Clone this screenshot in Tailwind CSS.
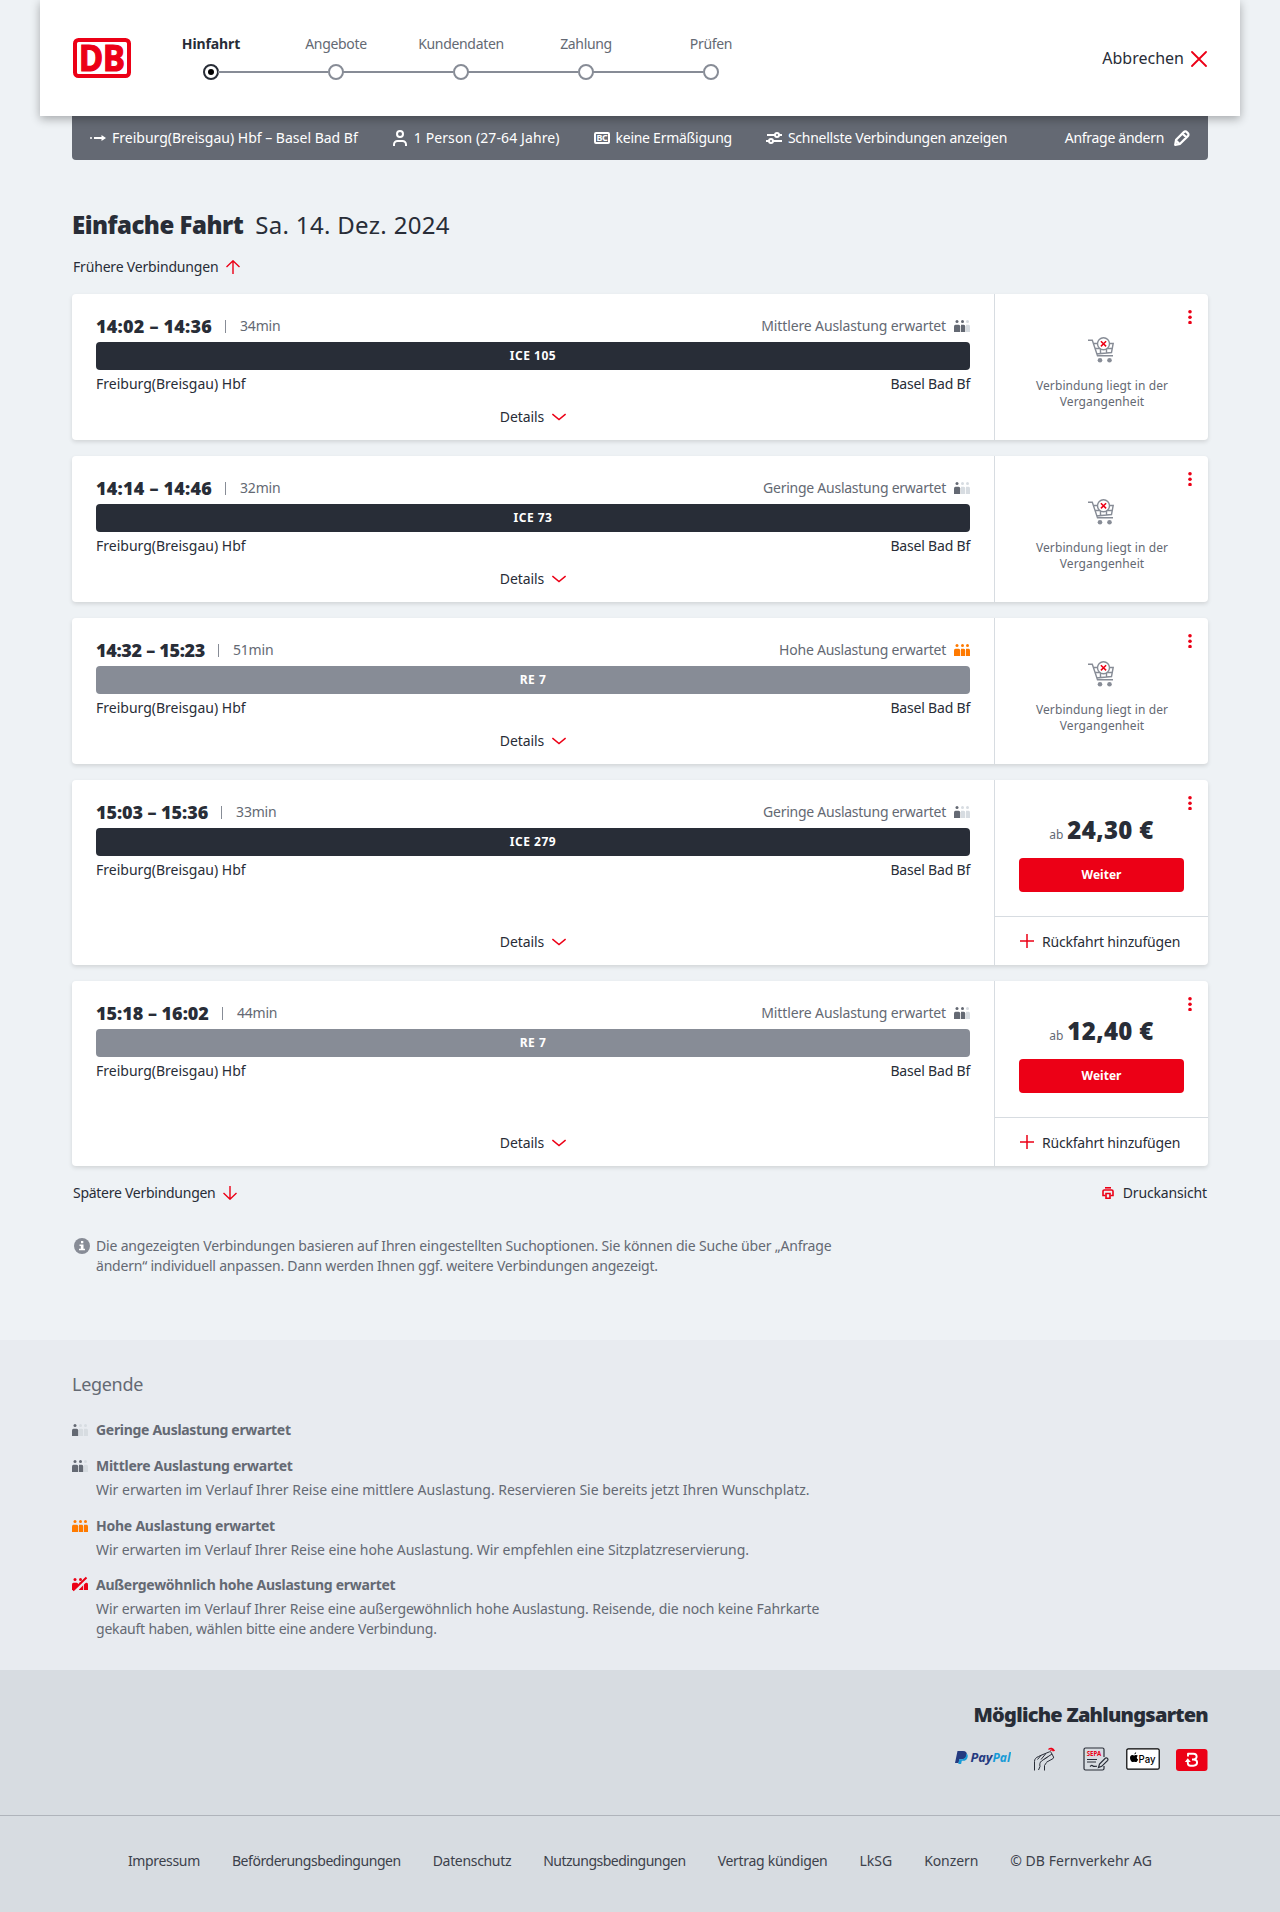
<!DOCTYPE html>
<html lang="de">
<head>
  <meta charset="UTF-8" />
  <meta name="viewport" content="width=device-width, initial-scale=1">
  <title>Einfache Fahrt – Freiburg(Breisgau) Hbf – Basel Bad Bf</title>
  <script src="https://cdn.jsdelivr.net/npm/@tailwindcss/browser@4"></script>
</head>
<body class="bg-[#eef2f5] text-[#282d37] font-['Noto_Sans',sans-serif] text-sm leading-5">

  <!-- header -->
  <header class="relative z-10 mx-10 h-[116px] bg-white shadow-[0_3px_9px_rgba(0,0,0,0.3)] flex pl-8 pr-[33px]">
    <svg class="mt-[38px] ml-px w-[58px] h-10 shrink-0 overflow-visible" viewBox="0 0 58 40">
      <rect x="2" y="2" width="54" height="36" rx="3.5" fill="#fff" stroke="#ec0016" stroke-width="4"/>
      <text x="6" y="32.600" font-family="Noto Sans" font-weight="700" font-size="35" textLength="46" lengthAdjust="spacingAndGlyphs" fill="#ec0016" stroke="#ec0016" stroke-width="1.200">DB</text>
    </svg>
    <ol id="steps" class="flex ml-[17px] mt-[34px]"></ol>
    <a class="ml-auto mt-12 h-5 flex items-center gap-[7px] text-base leading-5">Abbrechen
      <svg class="w-4 h-4 mt-px" viewBox="0 0 16 16" stroke="#ec0016" stroke-width="1.8" stroke-linecap="round"><path d="M1 1l14 14M15 1L1 15"/></svg>
    </a>
  </header>

  <!-- search summary -->
  <div class="mx-[72px] h-11 rounded-b bg-[#646973] text-white flex items-center pl-[18px] pr-[18px]">
    <span class="flex items-center gap-1.5">
      <svg class="w-4 h-4" viewBox="0 0 16 16" fill="#fff"><circle cx="1" cy="8" r="1"/><path d="M4 7h7.500V5L16 8l-4.500 3V9H4z"/></svg>
      Freiburg(Breisgau) Hbf – Basel Bad Bf</span>
    <span class="flex items-center gap-1.5 ml-[34px] tracking-[0.1px]">
      <svg class="w-4 h-4" viewBox="0 0 16 16" fill="none" stroke="#fff" stroke-width="2"><circle cx="8" cy="4" r="3"/><path d="M2 16v-1.500A3.500 3.500 0 0 1 5.500 11h5a3.500 3.500 0 0 1 3.500 3.500V16"/></svg>
      1 Person (27-64 Jahre)</span>
    <span class="flex items-center gap-1.5 ml-[34px] tracking-[-0.27px]">
      <svg class="w-4 h-4" viewBox="0 0 16 16"><rect x="1" y="3" width="14" height="10" rx="1" fill="none" stroke="#fff" stroke-width="2"/><text x="2.500" y="10.900" font-family="Noto Sans" font-weight="700" font-size="8" textLength="11" lengthAdjust="spacingAndGlyphs" fill="#fff">BC</text></svg>
      keine Ermäßigung</span>
    <span class="flex items-center gap-1.5 ml-[34px] tracking-[-0.25px]">
      <svg class="w-4 h-4" viewBox="0 0 16 16" fill="none" stroke="#fff" stroke-width="2"><path d="M1 5h8M13 5h3M0 11h3M7 11h9"/><circle cx="11" cy="5" r="2"/><circle cx="5" cy="11" r="2"/></svg>
      Schnellste Verbindungen anzeigen</span>
    <a class="flex items-center gap-2.5 ml-auto tracking-[-0.3px]">Anfrage ändern
      <svg class="w-4 h-4" viewBox="0 0 16 16" fill="none" stroke="#fff" stroke-width="2.200" stroke-linejoin="round"><path d="M1.200 14.800l.9-5 7.700-7.700c.9-.9 2.200-.9 3 0l1 1c.9.9.9 2.200 0 3l-7.700 7.700zM9 4l3.500 3.500M2 10.500L5.500 14"/></svg>
    </a>
  </div>

  <main class="mx-[72px]">
    <h1 class="mt-[49px] h-8 flex gap-3 text-2xl leading-8 tracking-[0.32px]"><b class="font-black tracking-[-0.5px]">Einfache Fahrt</b> Sa. 14. Dez. 2024</h1>
    <a class="mt-4 ml-px h-5 flex items-center gap-2 tracking-[-0.18px]">Frühere Verbindungen
      <svg class="w-3.5 h-3.5" viewBox="0 0 14 14" fill="none" stroke="#ec0016" stroke-width="1.400"><path d="M7 14V1M.5 7L7 .8 13.500 7"/></svg>
    </a>

    <div id="list" class="mt-[17px] flex flex-col gap-4"></div>

    <div class="mt-[17px] h-5 flex justify-between pl-px pr-px">
      <a class="flex items-center gap-2 tracking-[-0.27px]">Spätere Verbindungen
        <svg class="w-3.5 h-3.5" viewBox="0 0 14 14" fill="none" stroke="#ec0016" stroke-width="1.400"><path d="M7 0v13M.5 7L7 13.200 13.500 7"/></svg>
      </a>
      <a class="flex items-center gap-[9px] tracking-[-0.15px]">
        <svg class="w-3 h-3" viewBox="0 0 12 12" fill="none" stroke="#ec0016" stroke-width="1.600"><path d="M3 .8h6"/><path d="M3.500 8.500H1V4.300c0-.8.5-1.300 1.300-1.300h7.400c.8 0 1.300.5 1.300 1.300v4.200H8.500"/><path d="M4 6.500h4v4.700H4z"/></svg>
        Druckansicht</a>
    </div>

    <div class="mt-[33px] flex gap-1.5 pl-0.5 text-[#646973]">
      <svg class="w-4 h-4 mt-0.5" viewBox="0 0 16 16"><circle cx="8" cy="8" r="8" fill="#878c96"/><path fill="#fff" d="M7 3h2.300v2.200H7zM5.500 6.500h4v4.200H11v1.500H5v-1.500h1.800V8H5.500z"/></svg>
      <p class="tracking-[-0.18px]">Die angezeigten Verbindungen basieren auf Ihren eingestellten Suchoptionen. Sie können die Suche über „Anfrage<br><span class="tracking-[-0.21px]">ändern“ individuell anpassen. Dann werden Ihnen ggf. weitere Verbindungen angezeigt.</span></p>
    </div>
  </main>

  <!-- legend -->
  <section class="mt-16 h-[330px] px-[72px] pt-8 bg-[#e8ebf0] text-[#646973]">
    <h2 class="text-lg leading-6 tracking-[-0.3px]">Legende</h2>
    <dl class="mt-6 flex flex-col gap-4">
      <div class="flex gap-2"><span data-seats="1" class="mt-1"></span>
        <dt class="font-bold tracking-[-0.3px]">Geringe Auslastung erwartet</dt></div>
      <div class="flex gap-2"><span data-seats="2" class="mt-1"></span>
        <div><dt class="font-bold tracking-[-0.26px]">Mittlere Auslastung erwartet</dt>
          <dd class="mt-1 tracking-[-0.01px]">Wir erwarten im Verlauf Ihrer Reise eine mittlere Auslastung. Reservieren Sie bereits jetzt Ihren Wunschplatz.</dd></div></div>
      <div class="flex gap-2"><span data-seats="3" class="mt-1"></span>
        <div><dt class="font-bold tracking-[-0.23px]">Hohe Auslastung erwartet</dt>
          <dd class="mt-1 tracking-[-0.07px]">Wir erwarten im Verlauf Ihrer Reise eine hohe Auslastung. Wir empfehlen eine Sitzplatzreservierung.</dd></div></div>
      <div class="flex gap-2 -mt-px"><span data-seats="4" class="mt-[3px]"></span>
        <div><dt class="font-bold tracking-[-0.27px]">Außergewöhnlich hohe Auslastung erwartet</dt>
          <dd class="mt-1 tracking-[-0.09px]">Wir erwarten im Verlauf Ihrer Reise eine außergewöhnlich hohe Auslastung. Reisende, die noch keine Fahrkarte<br><span class="tracking-[-0.2px]">gekauft haben, wählen bitte eine andere Verbindung.</span></dd></div></div>
    </dl>
  </section>

  <!-- footer -->
  <footer class="h-[242px] bg-[#d7dce1]">
    <div class="h-[146px] border-b border-[#afb4bb] px-[72px] pt-[31px] flex flex-col items-end">
      <h2 class="text-xl leading-7 font-black tracking-[-0.75px]">Mögliche Zahlungsarten</h2>
      <div class="mt-[18px] h-6 flex items-center">
        <svg class="w-14 h-4 -mt-0.5 mr-px" viewBox="0 0 56 16">
          <path fill="#253b80" d="M2.500 1H8c3 0 4.300 1.700 3.700 4.300C11.100 8.300 9 9.300 6.500 9.300H4.400L3.600 13H0z"/>
          <path fill="#179bd7" d="M11.500 3.600c1.200.7 1.500 2 1.100 3.600-.6 2.600-2.300 3.600-4.600 3.600H6.800L6.100 14H3.300l1-4.700h2.200c2.700 0 4.600-1.300 5-5.700z"/>
          <text y="12" font-family="Noto Sans" font-style="italic" font-weight="700" font-size="11.500"><tspan x="15.500" textLength="22" lengthAdjust="spacingAndGlyphs" fill="#253b80">Pay</tspan><tspan x="37.500" textLength="18" lengthAdjust="spacingAndGlyphs" fill="#179bd7">Pal</tspan></text>
        </svg>
        <svg class="w-6 h-6 ml-[21px]" viewBox="0 0 24 24" fill="none" stroke="#282d37" stroke-width="1" stroke-linejoin="round">
          <path d="M1.500 23.500V14.500c0-2.500 1.500-4 4-5l2.500-1.200M11.500 23.500v-5l2-3M8 8.300l8.500-3.500c.8-.3 1.400 0 1.700.7l2.300 4.500c.3.700 0 1.300-.6 1.700l-6.400 3.500M8 8.300L4.500 12.500M12.500 7L8 12.500M14.500 10L8.500 14c-1.700 1.300-2 3.500-1.500 5.500l-1.500 3.500M11.500 12l7.500-5"/>
          <path stroke="#ec0016" stroke-width="1.300" d="M15.500 2.500c2-2 4.500-1.500 6 1.500M17.200 3.500c1.300-1 2.500-.7 3.200.8"/>
        </svg>
        <svg class="w-[26px] h-6 ml-[26px]" viewBox="0 0 26 24" fill="none" stroke="#282d37" stroke-width="1.200">
          <path d="M21 10V2.500A1.500 1.500 0 0 0 19.500 1H2.500A1.500 1.500 0 0 0 1 2.500v19A1.500 1.500 0 0 0 2.500 23h17a1.500 1.500 0 0 0 1.500-1.500V19M4 12.500h10M4 15h9"/>
          <path d="M7 19.500c1.500-1.500 2-1.500 3-.5s2 0 4 .3M15.500 20.500l1-3.500 6-6c1.500-.7 3 .8 2.200 2.300l-6 6z"/>
          <text x="3.700" y="9.300" font-family="Noto Sans" font-weight="700" font-size="7" textLength="14.500" lengthAdjust="spacingAndGlyphs" fill="#ec0016" stroke="none">SEPA</text>
        </svg>
        <svg class="w-[34px] h-[22px] ml-[17px]" viewBox="0 0 34 22">
          <rect x=".8" y=".8" width="32.400" height="20.400" rx="1.500" fill="#fff" stroke="#000" stroke-width="1.200"/>
          <path transform="translate(-1.300 -.9) scale(1.120)" d="M8.700 6.500c.1-1 .7-1.600 1.500-1.800.1 1-.6 1.700-1.500 1.800zM8.300 7.500c.6 0 1.100-.5 1.900-.5.600 0 1.200.3 1.500.8-1.300.9-1.200 2.700.3 3.300-.5 1.400-1.200 2.300-2 2.300-.6 0-.9-.3-1.600-.3s-1 .3-1.600.3C5.600 13.300 4 9.800 5.200 8c.7-1.100 1.900-1.200 3.100-.5z"/>
          <text x="12.500" y="14.500" font-family="Inter" font-weight="500" font-size="10.500" textLength="17" lengthAdjust="spacingAndGlyphs">Pay</text>
        </svg>
        <svg class="w-8 h-[22px] ml-4 mt-0.5" viewBox="0 0 32 22">
          <rect width="31.500" height="22" rx="3" fill="#ec0016"/>
          <path fill="none" stroke="#fff" stroke-width="1.900" stroke-linejoin="round" d="M12 7.500V4.700h5.500c4.200 0 4.200 5.800 0 5.800H16M17.500 10.500c4.800 0 4.800 6.200 0 6.200H14.500c-2 0-2.700-1-2.700-2.700V11"/>
          <path fill="#fff" d="M8.800 13l3-3.800 3 3.800z"/>
        </svg>
      </div>
    </div>
    <nav class="mt-[35px] flex justify-center gap-8 text-[#3c414b]">
      <a class="tracking-[-0.33px]">Impressum</a>
      <a class="tracking-[-0.45px]">Beförderungsbedingungen</a>
      <a class="tracking-[-0.33px]">Datenschutz</a>
      <a class="tracking-[-0.5px]">Nutzungsbedingungen</a>
      <a class="tracking-[-0.3px]">Vertrag kündigen</a>
      <a>LkSG</a>
      <a class="tracking-[-0.1px]">Konzern</a>
      <a class="tracking-[0.05px]">© DB Fernverkehr AG</a>
    </nav>
  </footer>

<script>
const $ = id => document.getElementById(id);

const steps = ["Hinfahrt", "Angebote", "Kundendaten", "Zahlung", "Prüfen"];

const LOAD_TEXT = { 1: "Geringe", 2: "Mittlere", 3: "Hohe" };
const LOAD_TRACK = { 1: "tracking-[-0.25px]", 2: "tracking-[-0.13px]", 3: "tracking-[-0.23px]" };

const trips = [
  { time: "14:02 – 14:36", dur: "34min", train: "ICE 105", load: 2, track: "tracking-[0.22px]" },
  { time: "14:14 – 14:46", dur: "32min", train: "ICE 73",  load: 1, track: "tracking-[0.22px]" },
  { time: "14:32 – 15:23", dur: "51min", train: "RE 7",    load: 3, track: "tracking-[-0.32px]" },
  { time: "15:03 – 15:36", dur: "33min", train: "ICE 279", load: 1, price: "24,30 €", track: "tracking-[-0.08px]" },
  { time: "15:18 – 16:02", dur: "44min", train: "RE 7",    load: 2, price: "12,40 €", track: "tracking-[-0.02px]" },
];

// level 1-4, 4 = crossed out
function seats(level){
  const on = level === 4 ? "#ec0016" : level === 3 ? "#ff7a00" : "#646973";
  const c = i => i <= level ? on : "#d7dce1";
  return `<svg class="w-4 h-3 shrink-0" viewBox="0 0 16 12" overflow="visible">
    <g fill="${c(1)}"><circle cx="3" cy="1.500" r="1.500"/><path d="M0 12V6.500Q0 4.800 1.500 4.800h3.200Q6.200 4.800 6.200 6.500V12z"/></g>
    <g fill="${c(2)}"><circle cx="8.500" cy="1.500" r="1.500"/><path d="M7 12V4.800h2.800Q11.200 4.800 11.200 6.500V12z"/></g>
    <g fill="${c(3)}"><circle cx="13.500" cy="1.500" r="1.500"/><path d="M12 12V4.800h2.800Q16 4.800 16 6.500V12z"/></g>
    ${level === 4 ? `<path d="M1.500 14.500L15.500 .5" stroke="#e8ebf0" stroke-width="3.500"/><path d="M1 12.500L14.500 -.5" stroke="${on}" stroke-width="2"/>` : ""}
  </svg>`;
}

const cart = `<svg class="w-[26px] h-[26px] mr-[3px]" viewBox="0 0 26 26" fill="none" stroke="#878c96" stroke-width="1.400">
  <path d="M0 3.200h4.300L9.500 18.700H25M5.500 6.500h19.700L23.500 15.500 8.300 17M7 11.500h17M12.500 11v5.500M18.500 11v5"/>
  <circle cx="12" cy="23.300" r="2.300" fill="#878c96" stroke="none"/><circle cx="21.500" cy="23.300" r="2.300" fill="#878c96" stroke="none"/>
  <circle cx="15.500" cy="6.800" r="6" fill="#fff"/>
  <path d="M12.900 4.200l5.200 5.200M18.100 4.200l-5.200 5.200" stroke="#ec0016" stroke-width="1.500"/></svg>`;

const past = `<div class="h-full pt-[43px] pl-px flex flex-col items-center text-xs leading-4 text-[#646973] text-center tracking-[0.1px]">
  ${cart}<p class="mt-[15px]">Verbindung liegt in der<br>Vergangenheit</p></div>`;

const offer = price => `<div class="h-[137px] border-b border-[#d7dce1] px-6 pt-[34px]">
    <div class="flex items-baseline justify-center gap-1 leading-8"><span class="text-xs text-[#646973]">ab</span><b class="text-2xl leading-8 font-black tracking-[0.35px]">${price}</b></div>
    <button class="block mt-3 w-full h-[34px] rounded bg-[#ec0016] text-white text-xs font-bold">Weiter</button>
  </div>
  <a class="h-12 pl-[25px] pt-px flex items-center gap-2 tracking-[-0.2px]">
    <svg class="w-3.5 h-3.5 -mt-0.5" viewBox="0 0 14 14" stroke="#ec0016" stroke-width="1.500"><path d="M7 0v14M0 7h14"/></svg>Rückfahrt hinzufügen</a>`;

$("steps").innerHTML = steps.map((s, i) => `
  <li class="relative w-[125px] flex flex-col items-center">
    <span class="leading-5 pl-px ${i ? "text-[#646973] tracking-[-0.33px]" : "font-bold tracking-[-0.1px]"}">${s}</span>
    ${i < steps.length - 1 ? `<i class="absolute top-[37px] left-[70px] w-[110px] h-0.5 bg-[#878c96]"></i>` : ""}
    <i class="mt-2.5 w-4 h-4 rounded-full border-2 flex items-center justify-center ${i ? "border-[#878c96]" : "border-[#282d37]"}">
      ${i ? "" : `<i class="w-1.5 h-1.5 rounded-full bg-black"></i>`}</i>
  </li>`).join("");

$("list").innerHTML = trips.map(t => `
  <article class="flex bg-white rounded shadow-[0_2px_4px_rgba(0,0,0,0.12)] ${t.price ? "h-[185px]" : "h-[146px]"}">
    <div class="w-[922px] px-6 pt-[22px] pb-[13px] flex flex-col">
      <div class="h-5 flex items-center text-[#646973]">
        <b class="text-lg leading-5 font-black text-[#282d37] ${t.track}">${t.time}</b>
        <i class="ml-[13px] mr-3.5 w-px h-[13px] bg-[#878c96]"></i>
        <span class="tracking-[-0.2px]">${t.dur}</span>
        <span class="ml-auto mr-2 ${LOAD_TRACK[t.load]}">${LOAD_TEXT[t.load]} Auslastung erwartet</span>
        ${seats(t.load)}
      </div>
      <div class="mt-1.5 h-7 shrink-0 rounded text-white text-xs font-bold tracking-[0.5px] flex items-center justify-center ${t.train.startsWith("ICE") ? "bg-[#282d37]" : "bg-[#878c96]"}">${t.train}</div>
      <div class="mt-1 flex justify-between"><span>Freiburg(Breisgau) Hbf</span><span class="tracking-[-0.2px]">Basel Bad Bf</span></div>
      <a class="mt-auto flex items-center justify-center gap-2 tracking-[-0.1px]">Details
        <svg class="w-3.5 h-2" viewBox="0 0 14 8" fill="none" stroke="#ec0016" stroke-width="1.500"><path d="M.4 1L7 6.600 13.600 1"/></svg></a>
    </div>
    <div class="relative flex-1 border-l border-[#d7dce1]">
      <svg class="absolute right-4 top-4 w-1 h-[14px]" viewBox="0 0 4 14" fill="#ec0016"><circle cx="2" cy="1.800" r="1.800"/><circle cx="2" cy="7.300" r="1.800"/><circle cx="2" cy="12.600" r="1.800"/></svg>
      ${t.price ? offer(t.price) : past}
    </div>
  </article>`).join("");

document.querySelectorAll("[data-seats]").forEach(el => {
  el.innerHTML = seats(+el.dataset.seats);
});
</script>
</body>
</html>
